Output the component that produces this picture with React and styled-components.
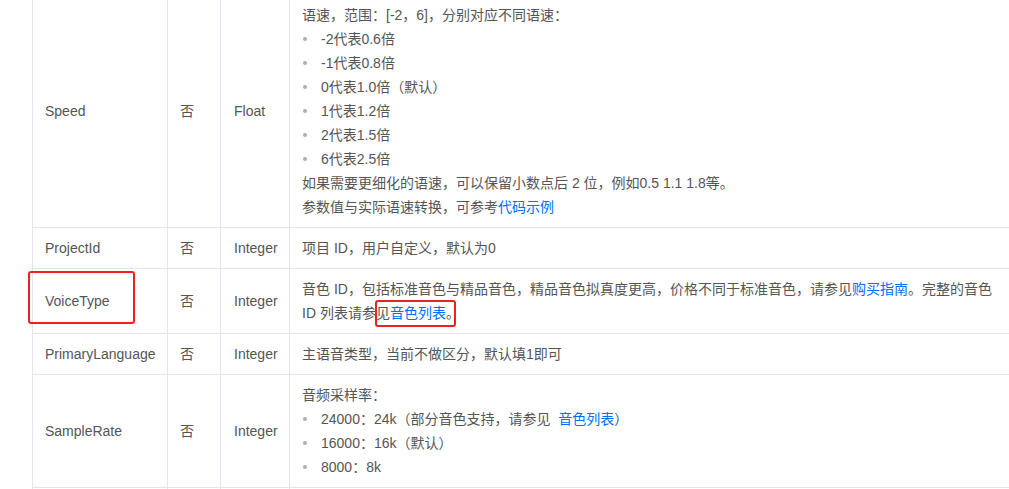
import React from 'react'
import styled, { createGlobalStyle } from 'styled-components'

const GlobalStyle = createGlobalStyle`
  html, body {
    margin: 0;
    padding: 0;
    background: #fff;
    overflow: hidden;
  }
  body {
    font-family: "Liberation Sans", Arial, "Noto Sans CJK SC", sans-serif;
    font-size: 14px;
    color: #555;
  }
`

const Page = styled.div`
  width: 1009px;
  height: 489px;
  overflow: hidden;
`

const Table = styled.table`
  margin: -6px 0 0 32px;
  border-collapse: collapse;
  table-layout: fixed;
  width: 978px;
`

const Cell = styled.td`
  border: 1px solid #e2e5ee;
  padding: 8px 12px 8px ${p => p.$pl || 12}px;
  line-height: 24px;
  vertical-align: middle;
  position: relative;
  white-space: ${p => (p.$wrap ? 'normal' : 'nowrap')};
`

const Line = styled.div``

const List = styled.ul`
  list-style: none;
  margin: 0;
  padding: 0;
`

const Item = styled.li`
  display: flex;
  align-items: center;
  &::before {
    content: '';
    width: 4px;
    height: 4px;
    border-radius: 50%;
    background: #a7afbd;
    margin: 0 14px 0 1px;
    flex: none;
  }
`

const Link = styled.a`
  color: #006eff;
  text-decoration: none;
  position: relative;
`

const Mark = styled.span`
  position: absolute;
  border: 2px solid #f02020;
  border-radius: 3px;
  pointer-events: none;
  left: ${p => p.$l}px;
  top: ${p => p.$t}px;
  width: ${p => p.$w}px;
  height: ${p => p.$h}px;
  box-sizing: border-box;
`

const Row = ({ name, type, children, mark }) => (
  <tr>
    <Cell>
      {name}
      {mark && <Mark $l={-5} $t={2} $w={107} $h={53} />}
    </Cell>
    <Cell>否</Cell>
    <Cell $pl={13}>{type}</Cell>
    <Cell $wrap>{children}</Cell>
  </tr>
)

export default function App() {
  return (
    <Page>
      <GlobalStyle />
      <Table>
        <colgroup>
          <col style={{ width: 135 }} />
          <col style={{ width: 53 }} />
          <col style={{ width: 69 }} />
          <col style={{ width: 721 }} />
        </colgroup>
        <tbody>
          <Row name="Speed" type="Float">
            <Line>语速，范围：[-2，6]，分别对应不同语速：</Line>
            <List>
              <Item>-2代表0.6倍</Item>
              <Item>-1代表0.8倍</Item>
              <Item>0代表1.0倍（默认）</Item>
              <Item>1代表1.2倍</Item>
              <Item>2代表1.5倍</Item>
              <Item>6代表2.5倍</Item>
            </List>
            <Line>如果需要更细化的语速，可以保留小数点后 2 位，例如0.5 1.1 1.8等。</Line>
            <Line>参数值与实际语速转换，可参考<Link>代码示例</Link></Line>
          </Row>
          <Row name="ProjectId" type="Integer">
            项目 ID，用户自定义，默认为0
          </Row>
          <Row name="VoiceType" type="Integer" mark>
            音色 ID，包括标准音色与精品音色，精品音色拟真度更高，价格不同于标准音色，请参见<Link>购买指南</Link>。完整的音色 ID 列表请参见<Link>音色列表<Mark $l={-15} $t={-5} $w={81} $h={27} /></Link>。
          </Row>
          <Row name="PrimaryLanguage" type="Integer">
            主语音类型，当前不做区分，默认填1即可
          </Row>
          <Row name="SampleRate" type="Integer">
            <Line>音频采样率：</Line>
            <List>
              <Item>24000：24k（部分音色支持，请参见&nbsp;&nbsp;<Link>音色列表</Link>）</Item>
              <Item>16000：16k（默认）</Item>
              <Item>8000：8k</Item>
            </List>
          </Row>
          <Row name="" type="">
            &nbsp;
          </Row>
        </tbody>
      </Table>
    </Page>
  )
}
